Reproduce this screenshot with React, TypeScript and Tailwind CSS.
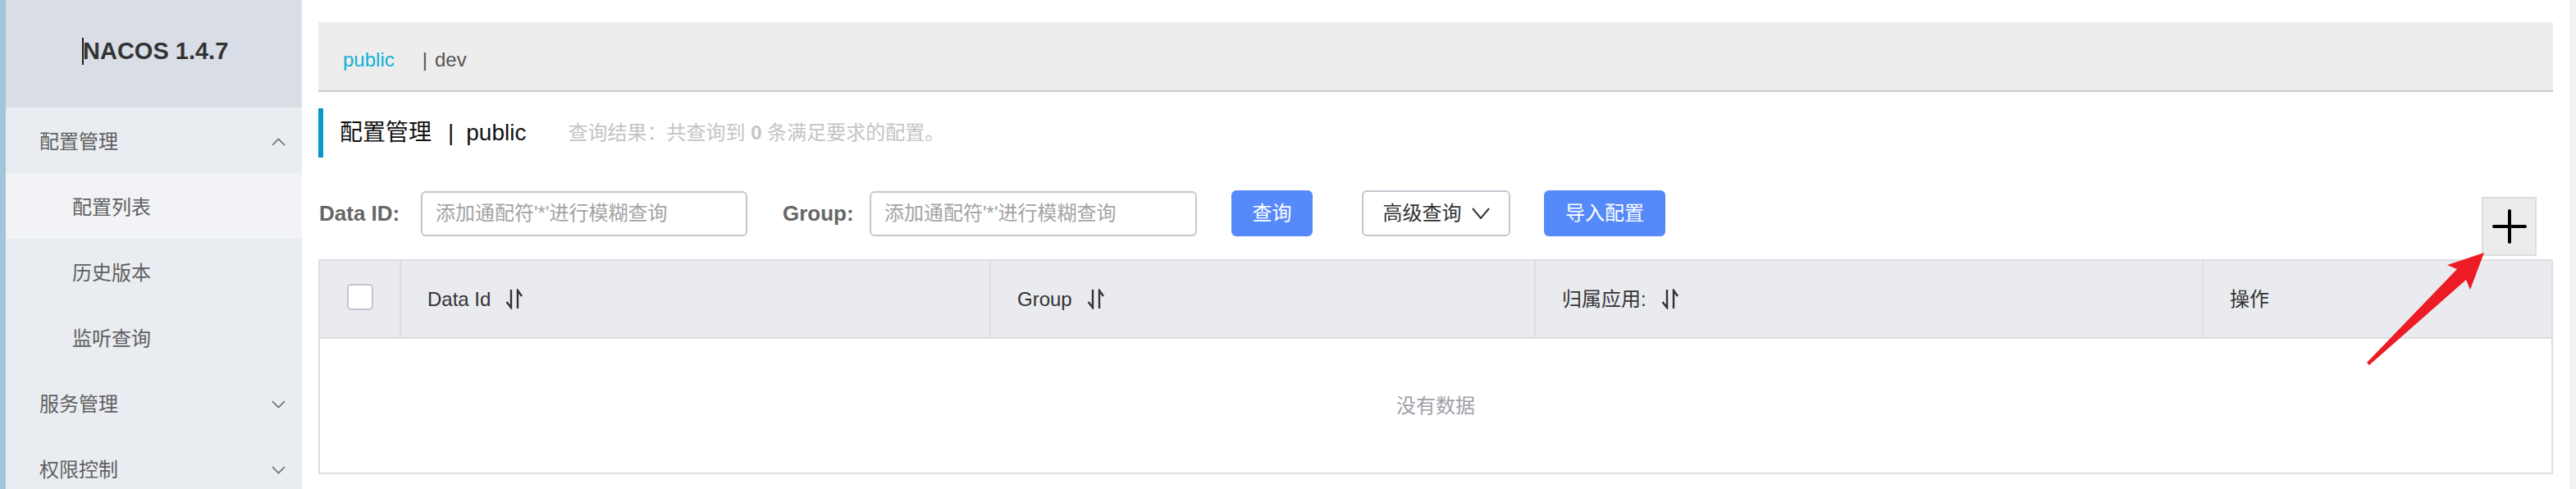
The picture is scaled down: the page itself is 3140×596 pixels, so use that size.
import React from "react";

const menu = [
  { label: "配置管理", level: 0, chevron: "up" },
  { label: "配置列表", level: 1, active: true },
  { label: "历史版本", level: 1 },
  { label: "监听查询", level: 1 },
  { label: "服务管理", level: 0, chevron: "down" },
  { label: "权限控制", level: 0, chevron: "down" },
];

function Chevron({ up }: { up?: boolean }) {
  return (
    <svg width="17" height="10" viewBox="0 0 17 10">
      <path
        d={up ? "M1 9 L8.5 1.5 L16 9" : "M1 1 L8.5 8.5 L16 1"}
        fill="none"
        stroke="#6b6b6b"
        strokeWidth="1.6"
      />
    </svg>
  );
}

function SortIcon() {
  return (
    <svg width="22" height="25" viewBox="0 0 22 25" className="ml-[18px]">
      <path d="M7 1 V23 L1.5 16" fill="none" stroke="#333" strokeWidth="2.4" />
      <path d="M15 24 V2 L20 9" fill="none" stroke="#333" strokeWidth="2.4" />
    </svg>
  );
}

function Sidebar() {
  return (
    <div className="flex w-[368px] shrink-0">
      <div className="w-[7px] bg-[#a3c5db]" />
      <div className="flex-1 bg-[#e9ecf1]">
        <div className="flex h-[131px] items-center bg-[#d9dee6] pb-[7px] pl-[93px]">
          <span className="mr-[-1px] inline-block h-[33px] w-[2px] bg-[#222]" />
          <span className="text-[29px] font-bold leading-none text-[#333]">NACOS 1.4.7</span>
        </div>
        {menu.map((m) => (
          <div
            key={m.label}
            className={
              "flex h-[80px] items-center justify-between pr-[20px] pt-[4px] " +
              (m.level ? "pl-[81px] " : "pl-[41px] ") +
              (m.active ? "bg-[#f1f3f7]" : "")
            }
          >
            <span className="text-[24px] leading-none text-[#606060]">{m.label}</span>
            {m.chevron && <Chevron up={m.chevron === "up"} />}
          </div>
        ))}
      </div>
    </div>
  );
}

function Main() {
  const cols = [
    { label: "Data Id", w: "w-[719px]", sort: true },
    { label: "Group", w: "w-[664px]", sort: true },
    { label: "归属应用:", w: "w-[814px]", sort: true },
    { label: "操作", w: "flex-1", sort: false },
  ];

  return (
    <div className="flex-1 px-[20px] pt-[27px]">
      <div className="flex h-[85px] items-center border-b-2 border-[#c8c8c8] bg-[#ededed] pl-[30px] pt-[8px] text-[24px] leading-none">
        <span className="text-[#0fb0d8]">public</span>
        <span className="ml-[34px] text-[#555]">|</span>
        <span className="ml-[9px] text-[#555]">dev</span>
      </div>

      <div className="mt-[20px] flex h-[60px] items-center border-l-[6px] border-[#0797c9] pl-[20px] leading-none">
        <span className="text-[28px] text-[#111]">配置管理</span>
        <span className="ml-[20px] text-[28px] text-[#111]">|</span>
        <span className="ml-[15px] text-[28px] text-[#111]">public</span>
        <span className="ml-[51px] text-[24px] text-[#c4c4c4]">
          查询结果：共查询到 <b className="font-bold">0</b> 条满足要求的配置。
        </span>
      </div>

      <div className="mt-[40px] flex h-[80px] items-start justify-between">
        <div className="flex items-center">
          <span className="w-[100px] pl-[1px] text-[26px] font-bold leading-none text-[#666]">Data ID:</span>
          <div className="ml-[25px] flex h-[55px] w-[398px] items-center rounded-[6px] border-2 border-[#c4c6cf] bg-white pl-[16px] text-[24px] leading-none text-[#a3a3a3]">
            添加通配符'*'进行模糊查询
          </div>
          <span className="ml-[43px] w-[81px] text-[26px] font-bold leading-none text-[#666]">Group:</span>
          <div className="ml-[25px] flex h-[55px] w-[399px] items-center rounded-[6px] border-2 border-[#c4c6cf] bg-white pl-[16px] text-[24px] leading-none text-[#a3a3a3]">
            添加通配符'*'进行模糊查询
          </div>
          <button className="ml-[42px] flex h-[56px] w-[99px] items-center justify-center rounded-[6px] bg-[#5689fa] text-[24px] leading-none text-white">
            查询
          </button>
          <button className="ml-[60px] flex h-[56px] w-[181px] items-center justify-center rounded-[6px] border-2 border-[#c4c6cf] bg-white text-[24px] leading-none text-[#333]">
            高级查询
            <svg width="22" height="14" viewBox="0 0 22 14" className="ml-[12px]">
              <path d="M1 1 L11 13 L21 1" fill="none" stroke="#333" strokeWidth="2" />
            </svg>
          </button>
          <button className="ml-[41px] flex h-[56px] w-[148px] items-center justify-center rounded-[6px] bg-[#5689fa] text-[24px] leading-none text-white">
            导入配置
          </button>
        </div>
        <div className="mr-[20px] mt-[8px] flex h-[72px] w-[67px] items-center justify-center border-2 border-[#dcdcdc] bg-[#ececec]">
          <svg width="42" height="42" viewBox="0 0 42 42">
            <path d="M21 2 V40 M2 21 H40" stroke="#000" strokeWidth="4" strokeLinecap="round" />
          </svg>
        </div>
      </div>

      <div className="mt-[4px] border-2 border-[#dcdee3]">
        <div className="flex h-[95px] border-b-2 border-[#dcdee3] bg-[#e9ebef]">
          <div className="flex w-[99px] items-center justify-center border-r-2 border-[#dcdee3] pb-[6px]">
            <div className="h-[32px] w-[32px] rounded-[5px] border-2 border-[#c4c6cf] bg-white" />
          </div>
          {cols.map((c, i) => (
            <div
              key={c.label}
              className={
                "flex items-center pl-[32px] text-[24px] leading-none text-[#333] " +
                c.w +
                (i < cols.length - 1 ? " border-r-2 border-[#dcdee3]" : "")
              }
            >
              {c.label}
              {c.sort && <SortIcon />}
            </div>
          ))}
        </div>
        <div className="flex h-[163px] items-center justify-center text-[24px] leading-none text-[#9fa0a8]">
          没有数据
        </div>
      </div>
    </div>
  );
}

export default function App() {
  return (
    <div className="relative flex h-[596px] w-[3140px] overflow-hidden bg-white font-['Liberation_Sans','Noto_Sans_CJK_SC',sans-serif]">
      <Sidebar />
      <Main />
      <div className="w-[8px] shrink-0 bg-[#f3f3f3]" />
      <svg
        className="pointer-events-none absolute left-[2870px] top-[300px]"
        width="170"
        height="160"
        viewBox="2870 300 170 160"
      >
        <polygon
          points="3028,308 2983,323 2995,328 2885,442 2888,445 3006,341 3011,353"
          fill="#ed1c24"
        />
      </svg>
    </div>
  );
}
